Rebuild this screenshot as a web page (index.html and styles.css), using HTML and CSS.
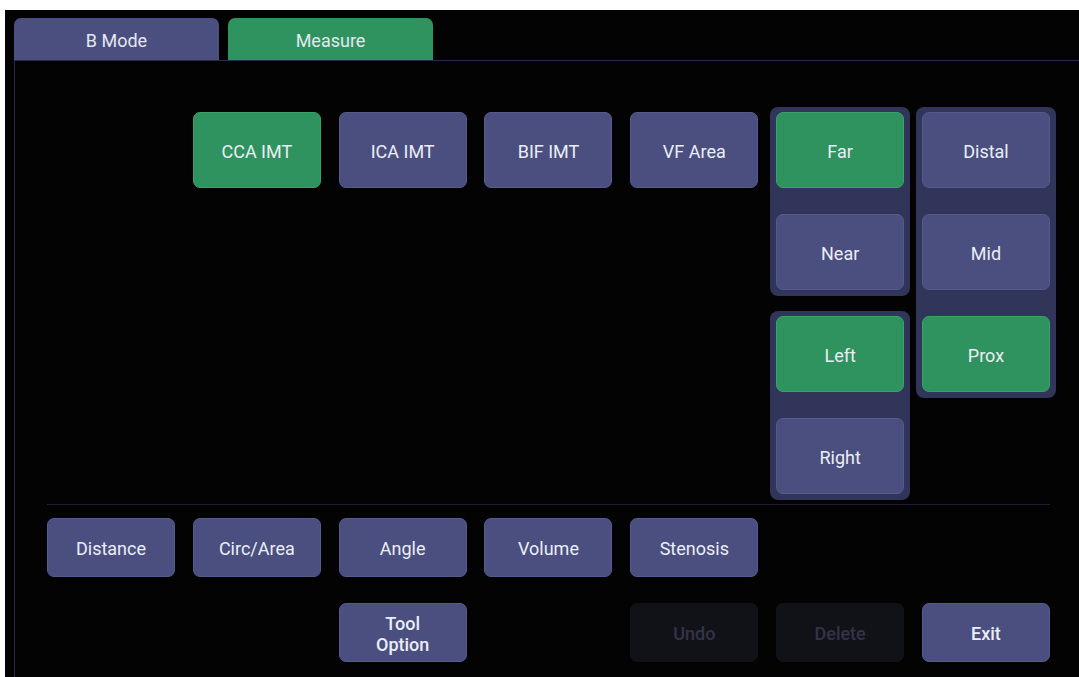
FILE: index.html
```html
<!DOCTYPE html>
<html lang="en">
<head>
  <meta charset="UTF-8" />
  <title>Measure</title>
  <link rel="stylesheet" href="styles.css">
</head>
<body>
  <div class="screen">
    <div class="tabs">
      <div class="tab">B Mode</div>
      <div class="tab active">Measure</div>
    </div>

    <div class="panel">
      <div class="grid top">
        <button class="btn on c2">CCA IMT</button>
        <button class="btn c3">ICA IMT</button>
        <button class="btn c4">BIF IMT</button>
        <button class="btn c5">VF Area</button>

        <div class="group g-side">
          <button class="btn on">Far</button>
          <button class="btn">Near</button>
        </div>
        <div class="group g-pos">
          <button class="btn">Distal</button>
          <button class="btn">Mid</button>
          <button class="btn on">Prox</button>
        </div>
        <div class="group g-lr">
          <button class="btn on">Left</button>
          <button class="btn">Right</button>
        </div>
      </div>

      <div class="sep"></div>

      <div class="grid bottom">
        <button class="btn">Distance</button>
        <button class="btn">Circ/Area</button>
        <button class="btn">Angle</button>
        <button class="btn">Volume</button>
        <button class="btn">Stenosis</button>

        <button class="btn strong c3 r2">Tool<br>Option</button>
        <button class="btn strong off c5 r2">Undo</button>
        <button class="btn strong off c6 r2">Delete</button>
        <button class="btn strong c7 r2">Exit</button>
      </div>
    </div>
  </div>
</body>
</html>
```

FILE: styles.css
```css
body {
  margin: 0;
  background: #fff;
  font-family: Roboto, "Noto Sans", sans-serif;
  overflow: hidden;
}

.screen {
  margin: 10px 0 0 5px;
  height: 667px;
  background: #030303;
  padding: 8px 0 0 9px;
  box-sizing: border-box;
}

.tabs {
  display: flex;
  gap: 9px;
}

.tab {
  width: 205px;
  height: 42px;
  padding-top: 2px;
  box-sizing: border-box;
  border-radius: 7px 7px 0 0;
  background: #4a4f80;
  color: #e6e7f0;
  font-size: 18px;
  display: flex;
  align-items: center;
  justify-content: center;
}

.tab.active {
  background: #2e935e;
}

.panel {
  border-top: 1px solid #282b48;
  border-left: 1px solid #282b48;
  height: 620px;
  padding: 51px 0 0 32px;
  box-sizing: border-box;
}

.grid {
  display: grid;
  grid-template-columns: repeat(7, 128px);
  column-gap: 17.83px;
}

.grid.top {
  grid-template-rows: repeat(4, 76px);
  row-gap: 26px;
}

.grid.bottom {
  grid-template-rows: 59px 59px;
  row-gap: 26px;
}

.btn {
  font-family: inherit;
  font-size: 18px;
  color: #eceef5;
  background: #4a4f80;
  border: 1px solid #565b8e;
  border-radius: 7px;
  padding: 2px 0 0;
  line-height: 21px;
}

.btn.on {
  background: #2e935e;
  border-color: #38a26b;
}

.btn.strong {
  font-weight: 500;
}

.btn.off {
  background: #111217;
  border-color: #111217;
  color: #32334a;
}

.c2 { grid-column: 2; }
.c3 { grid-column: 3; }
.c4 { grid-column: 4; }
.c5 { grid-column: 5; }
.c6 { grid-column: 6; }
.c7 { grid-column: 7; }
.r2 { grid-row: 2; }

.top .btn.c2, .top .btn.c3, .top .btn.c4, .top .btn.c5 {
  grid-row: 1;
}

.group {
  margin: -5px -6px -6px;
  padding: 5px 6px 6px;
  background: #32355a;
  border-radius: 8px;
  display: flex;
  flex-direction: column;
  justify-content: space-between;
}

.group .btn {
  height: 76px;
}

.g-side {
  grid-column: 6;
  grid-row: 1 / span 2;
}

.g-pos {
  grid-column: 7;
  grid-row: 1 / span 3;
}

.g-lr {
  grid-column: 6;
  grid-row: 3 / span 2;
}

.sep {
  width: 1003px;
  height: 1px;
  background: #1d1e33;
  margin: 10px 0 13px;
}
```
